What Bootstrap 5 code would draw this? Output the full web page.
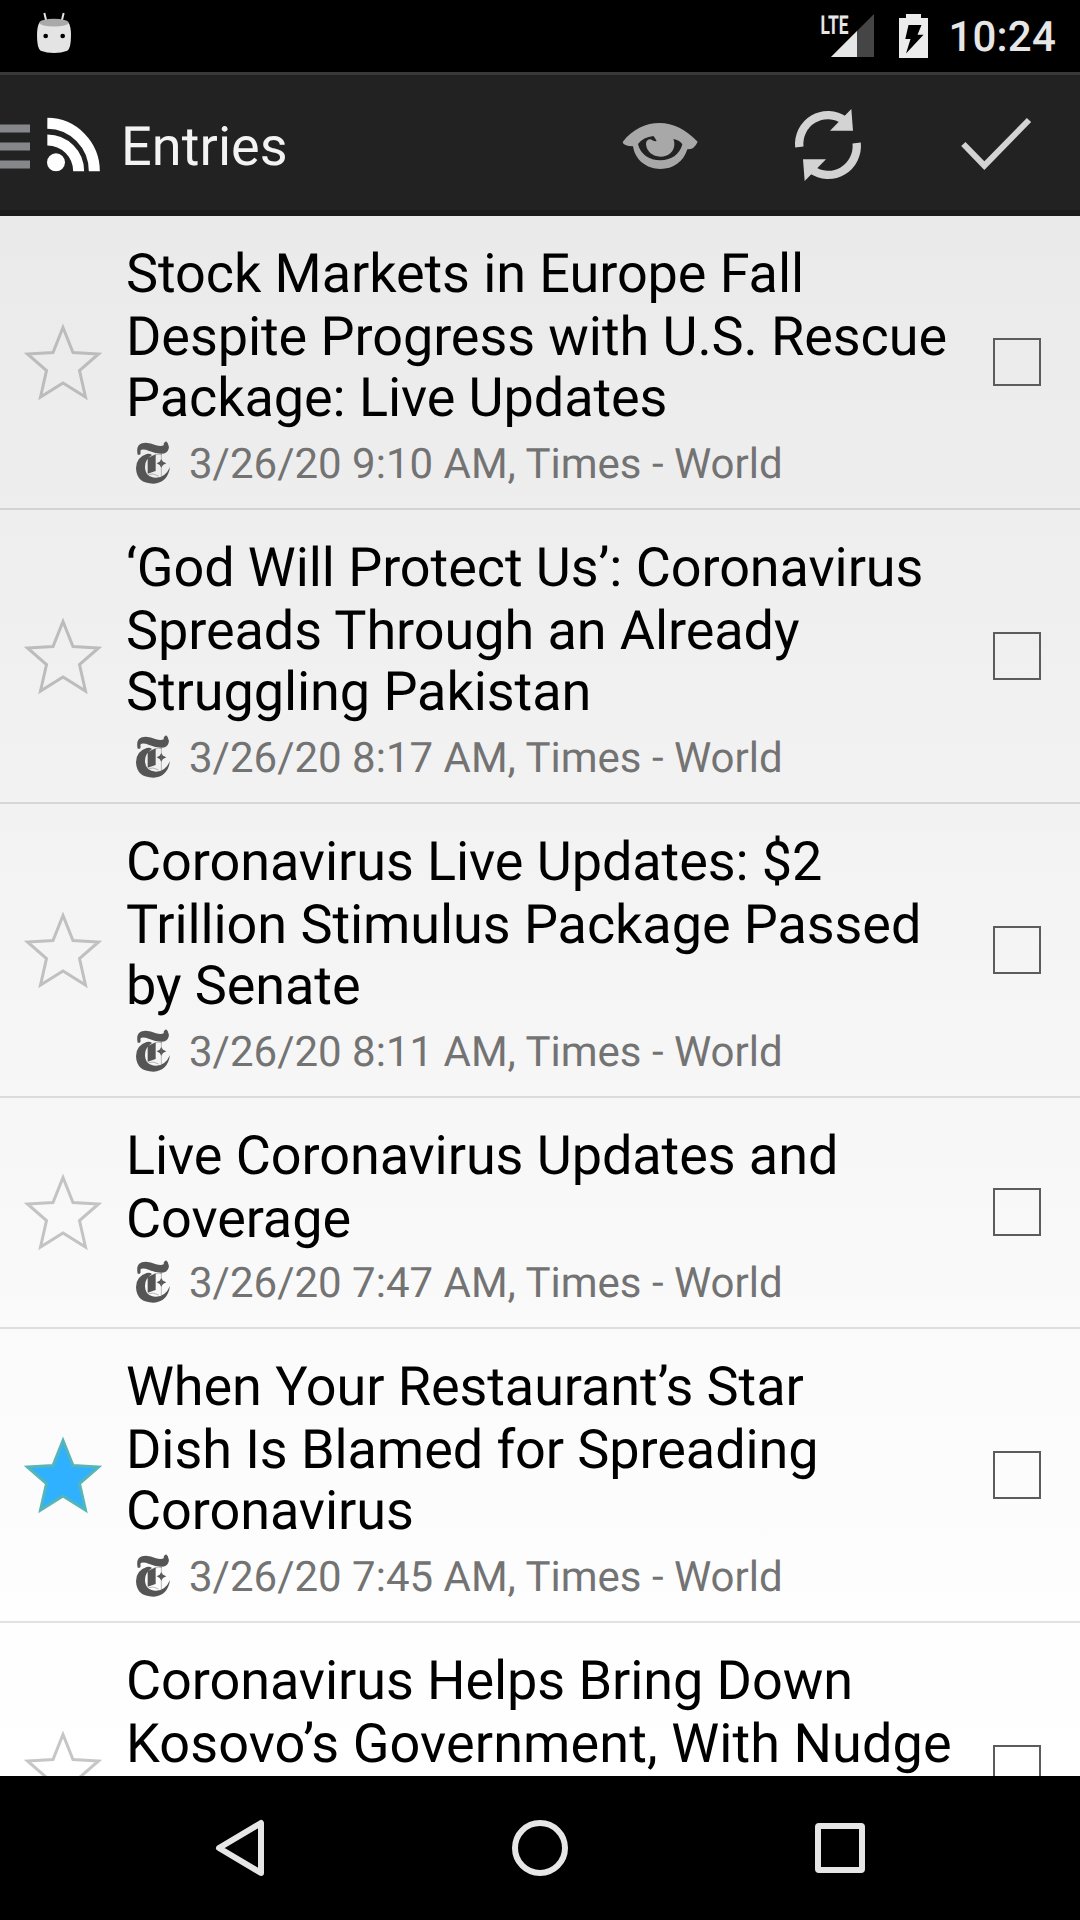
<!DOCTYPE html>
<html lang="en">
<head>
<meta charset="utf-8">
<meta name="viewport" content="width=device-width, initial-scale=1">
<title>Entries</title>
<link href="https://cdn.jsdelivr.net/npm/bootstrap@5.3.0/dist/css/bootstrap.min.css" rel="stylesheet">
<style>
  body { font-family: Roboto, "Noto Sans", sans-serif; background: #000; text-rendering: geometricPrecision; }
  .screen { width: 1080px; height: 1920px; }
  .statusbar { height: 72px; background: #000; color: #e6e6e6; padding: 0 24px 0 36px; }
  .clock { font-size: 42px; font-weight: 500; line-height: 49px; margin: 3px 0 0 20px; letter-spacing: .2px; }
  .actionbar { height: 144px; background: #222; border-top: 3px solid #393939; border-bottom: 6px solid #1b1b1b; padding: 5px 0 0; }
  .actionbar h1 { font-size: 54px; line-height: 63px; font-weight: 400; color: #f3f3f3; margin: 4px 0 0 20px; letter-spacing: .1px; }
  .entries { height: 1560px; background: linear-gradient(#eaeaea 0, #eeeeee 300px, #fcfcfc 1240px, #fff 1560px); }
  .entries > .entry.list-group-item { background: transparent; border: 0; border-bottom: 2px solid rgba(0,0,0,.11); border-radius: 0; padding: 27px 0 19px; color: #000; flex: none; }
  .entry-star { width: 126px; margin-top: -6px; margin-bottom: 3px; }
  .headline { font-size: 54px; line-height: 63px; font-weight: 400; margin: 0 0 8px; white-space: nowrap; letter-spacing: -.075px; }
  .headline span:nth-child(3) { line-height: 59px; margin-bottom: 12px; }
  .headline .airy { letter-spacing: .1px; }
  .meta-line { font-size: 42px; line-height: 49px; color: #737373; }
  .meta-line svg { margin: 0 19px 4px 10px; }
  .entry .tick[type=checkbox] { width: 48px; height: 48px; border: 2px solid #5c5c5c; border-radius: 0; background: transparent; margin: 0 39px 9px 0; }
  .navkeys { height: 144px; background: #000; }
  svg { display: block; flex: none; }
</style>
</head>
<body>
<svg width="0" height="0" class="position-absolute" aria-hidden="true">
  <symbol id="star" viewBox="0 0 80 80"><path d="M40 5.500 L50 30.500 L75.500 32 L56.500 48.500 L62.500 75 L40 61 L17.500 75 L23.500 48.500 L4.500 32 L30 30.500Z" stroke-width="3"/></symbol>
  <symbol id="times" viewBox="48 29 102 129">
    <g fill="#555">
      <path d="M53 70Q47 41 66 36Q84 31 108 42Q124 47 132 41Q128 36 138 30Q149 37 146 52Q142 67 124 67Q106 67 88 59Q66 51 61 58Q63 65 60 70Z"/>
      <path d="M80 68Q48 78 48 111Q50 157 100 157Q143 155 150 107Q136 139 108 139Q75 137 75 106Q75 84 96 71Q90 66 80 68Z"/>
      <path d="M83 80L107 69V119L83 127Z"/>
      <path d="M124 83L129 91L139 96L129 101L124 109L119 101L110 96L119 91Z"/>
    </g>
    <path d="M124 66V140M104 72Q114 66 126 70M86 130Q98 124 116 134" fill="none" stroke="#777" stroke-width="1.500"/>
  </symbol>
</svg>

<div class="screen d-flex flex-column overflow-hidden">
  <header class="statusbar d-flex align-items-center">
    <svg width="36" height="48" viewBox="108 36 108 144" aria-hidden="true">
      <path d="M133 39L139 64M191 39L185 64" stroke="#e4e4e4" stroke-width="6"/>
      <path d="M118 68Q111 80 111 105Q111 145 122 152Q140 159 162 159Q184 159 202 152Q213 145 213 105Q213 80 206 68Z" fill="#e4e4e4"/>
      <ellipse cx="162" cy="68" rx="44" ry="11.500" fill="#a9a9a9"/>
      <circle cx="137" cy="108" r="7"/><circle cx="188" cy="108" r="7"/>
    </svg>
    <svg class="ms-auto" width="66" height="56" viewBox="810 8 66 56">
      <path d="M831 57H874V14Z" fill="#454545"/><path d="M831 57H857V31Z" fill="#e6e6e6"/>
      <text x="820.500" y="33.500" font-size="26" font-weight="700" fill="#e6e6e6" textLength="28" lengthAdjust="spacingAndGlyphs">LTE</text>
    </svg>
    <svg style="margin-left:23px" width="29" height="48" viewBox="899 12 29 48">
      <path d="M899 18H906V14H921V18H928V58H899Z" fill="#ececec"/>
      <path d="M908.500 25H921.500L917.500 34.700H923.500L906 53.500L910.500 39H905.300Z"/>
    </svg>
    <span class="clock">10:24</span>
  </header>

  <nav class="actionbar navbar flex-nowrap justify-content-start">
    <svg style="margin-top:2px" width="30" height="45" viewBox="0 0 30 45"><path d="M0 4.500H30M0 22.500H30M0 40.500H30" stroke="#85878b" stroke-width="8"/></svg>
    <svg style="margin-left:17px" width="54" height="56" viewBox="141 350 162 168">
      <circle cx="168" cy="486" r="27" fill="#fff"/>
      <path d="M142 419A94 94 0 0 1 236 513M142 369A142 144 0 0 1 283 513" fill="none" stroke="#fff" stroke-width="33"/>
    </svg>
    <h1>Entries</h1>
    <svg class="ms-auto" width="80" height="80" viewBox="60 45 240 240">
      <path d="M68 156C98 116 140 99 178 99C220 99 258 119 293 155Q284 178 262 178C250 216 220 237 181 237C140 237 105 210 99 169Q69 168 68 156Z" fill="#a8a8a8"/>
      <path d="M114 162Q130 141 160 138Q165 143 170 153Q160 155 152 148Q138 148 138 163C140 185 158 200 181 200C206 200 222 184 223 165Q224 156 220 147Q238 150 247 163C240 192 215 211 181 211C148 211 120 192 114 162Z" fill="#222"/>
    </svg>
    <svg style="margin-left:88px" width="80" height="80" viewBox="565 45 240 240">
      <g id="half"><path d="M599 171A86 87 0 0 1 734 91" fill="none" stroke="#d3d3d3" stroke-width="25"/><path d="M755 57L760 122H691Z" fill="#d3d3d3"/></g>
      <use href="#half" transform="rotate(180 685 165)"/>
    </svg>
    <svg style="margin:0 43px 0 89px" width="80" height="80" viewBox="1071 45 240 240"><path d="M1090 162L1153 227L1287 90" fill="none" stroke="#d3d3d3" stroke-width="18"/></svg>
  </nav>

  <main class="entries list-group list-group-flush rounded-0 overflow-hidden">
    <article class="entry list-group-item d-flex align-items-center">
      <div class="entry-star d-flex justify-content-center"><svg width="80" height="80" fill="none" stroke="#bcbcbc"><use href="#star"/></svg></div>
      <div class="flex-grow-1">
        <h2 class="headline"><span class="d-block">Stock Markets in Europe Fall</span><span class="d-block">Despite Progress with U.S. Rescue</span><span class="d-block">Package: Live Updates</span></h2>
        <div class="meta-line d-flex align-items-center"><svg width="34" height="43"><use href="#times"/></svg>3/26/20 9:10 AM, Times - World</div>
      </div>
      <input class="tick form-check-input flex-shrink-0" type="checkbox" aria-label="Mark read">
    </article>
    <article class="entry list-group-item d-flex align-items-center">
      <div class="entry-star d-flex justify-content-center"><svg width="80" height="80" fill="none" stroke="#bcbcbc"><use href="#star"/></svg></div>
      <div class="flex-grow-1">
        <h2 class="headline"><span class="d-block">‘God Will Protect Us’: Coronavirus</span><span class="d-block">Spreads Through an Already</span><span class="d-block">Struggling Pakistan</span></h2>
        <div class="meta-line d-flex align-items-center"><svg width="34" height="43"><use href="#times"/></svg>3/26/20 8:17 AM, Times - World</div>
      </div>
      <input class="tick form-check-input flex-shrink-0" type="checkbox" aria-label="Mark read">
    </article>
    <article class="entry list-group-item d-flex align-items-center">
      <div class="entry-star d-flex justify-content-center"><svg width="80" height="80" fill="none" stroke="#c0c0c0"><use href="#star"/></svg></div>
      <div class="flex-grow-1">
        <h2 class="headline"><span class="d-block">Coronavirus Live Updates: $2</span><span class="d-block">Trillion Stimulus Package Passed</span><span class="d-block">by Senate</span></h2>
        <div class="meta-line d-flex align-items-center"><svg width="34" height="43"><use href="#times"/></svg>3/26/20 8:11 AM, Times - World</div>
      </div>
      <input class="tick form-check-input flex-shrink-0" type="checkbox" aria-label="Mark read">
    </article>
    <article class="entry list-group-item d-flex align-items-center">
      <div class="entry-star d-flex justify-content-center"><svg width="80" height="80" fill="none" stroke="#c3c3c3"><use href="#star"/></svg></div>
      <div class="flex-grow-1">
        <h2 class="headline"><span class="d-block">Live Coronavirus Updates and</span><span class="d-block">Coverage</span></h2>
        <div class="meta-line d-flex align-items-center"><svg width="34" height="43"><use href="#times"/></svg>3/26/20 7:47 AM, Times - World</div>
      </div>
      <input class="tick form-check-input flex-shrink-0" type="checkbox" aria-label="Mark read">
    </article>
    <article class="entry list-group-item d-flex align-items-center">
      <div class="entry-star d-flex justify-content-center"><svg width="80" height="80" fill="#30b1ff" stroke="#55b5b8"><use href="#star"/></svg></div>
      <div class="flex-grow-1">
        <h2 class="headline"><span class="d-block">When Your Restaurant’s Star</span><span class="d-block">Dish Is Blamed for Spreading</span><span class="d-block">Coronavirus</span></h2>
        <div class="meta-line d-flex align-items-center"><svg width="34" height="43"><use href="#times"/></svg>3/26/20 7:45 AM, Times - World</div>
      </div>
      <input class="tick form-check-input flex-shrink-0" type="checkbox" aria-label="Mark read">
    </article>
    <article class="entry list-group-item d-flex align-items-center" style="height:294px">
      <div class="entry-star d-flex justify-content-center"><svg width="80" height="80" fill="none" stroke="#c6c6c6"><use href="#star"/></svg></div>
      <div class="flex-grow-1 align-self-start">
        <h2 class="headline"><span class="d-block">Coronavirus Helps Bring Down</span><span class="d-block airy">Kosovo’s Government, With Nudge</span></h2>
      </div>
      <input class="tick form-check-input flex-shrink-0" type="checkbox" aria-label="Mark read">
    </article>
  </main>

  <footer class="navkeys d-flex justify-content-center align-items-center">
    <svg width="60" height="60" viewBox="210 1818 60 60"><path d="M219 1848L261 1823V1873Z" fill="none" stroke="#e6e6e6" stroke-width="6" stroke-linejoin="round"/></svg>
    <svg style="margin:0 240px" width="60" height="60" viewBox="510 1818 60 60"><circle cx="540" cy="1848" r="25" fill="none" stroke="#e6e6e6" stroke-width="6"/></svg>
    <svg width="60" height="60" viewBox="810 1818 60 60"><rect x="818" y="1826" width="44" height="44" rx="1" fill="none" stroke="#e6e6e6" stroke-width="6"/></svg>
  </footer>
</div>
<script src="https://cdn.jsdelivr.net/npm/bootstrap@5.3.0/dist/js/bootstrap.bundle.min.js"></script>
</body>
</html>
